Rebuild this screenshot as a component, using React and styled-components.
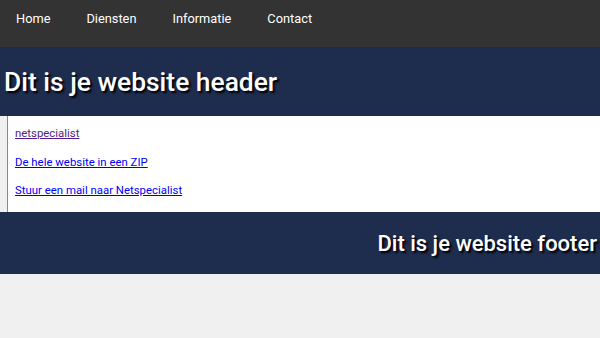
import React from "react";
import styled, { createGlobalStyle } from "styled-components";

const Global = createGlobalStyle`
  html, body { margin: 0; padding: 0; background: #f0f0f0; }
  body { font-family: Roboto, "Liberation Sans", sans-serif; }
`;

const Nav = styled.nav`
  height: 47px;
  background: #333333;
  display: flex;
  align-items: center;
  padding: 0 0 10px 16px;
  box-sizing: border-box;
  gap: 36px;
`;

const NavLink = styled.a`
  color: #ffffff;
  font-size: 12.8px;
  text-decoration: none;
`;

const Banner = styled.header`
  height: ${(p) => (p.$right ? "62px" : "69px")};
  background: #1e2c4e;
  display: flex;
  align-items: center;
  justify-content: ${(p) => (p.$right ? "flex-end" : "flex-start")};
  padding: 0 3px 0 4px;
  box-sizing: border-box;
`;

const BannerTitle = styled.h1`
  margin: 0;
  color: #ffffff;
  font-size: ${(p) => (p.$small ? "22px" : "26.4px")};
  font-weight: 500;
  text-shadow: 2px 2px 2px #000000;
`;

const Main = styled.main`
  display: flex;
  background: #f0f0f0;
`;

const Content = styled.div`
  flex: 1;
  margin-left: 7px;
  border-left: 1px solid #888888;
  background: #ffffff;
  padding: 10px 7px 15px;
  display: flex;
  flex-direction: column;
  align-items: flex-start;
  gap: 14.5px;
  box-sizing: border-box;
`;

const Link = styled.a`
  font-size: 11.4px;
  color: ${(p) => (p.$visited ? "#551a8b" : "#0000ee")};
  text-decoration: underline;
  line-height: 14px;
`;

export default function App() {
  return (
    <>
      <Global />
      <Nav>
        <NavLink href="#">Home</NavLink>
        <NavLink href="#">Diensten</NavLink>
        <NavLink href="#">Informatie</NavLink>
        <NavLink href="#">Contact</NavLink>
      </Nav>
      <Banner>
        <BannerTitle>Dit is je website header</BannerTitle>
      </Banner>
      <Main>
        <Content>
          <Link $visited href="#">netspecialist</Link>
          <Link href="#">De hele website in een ZIP</Link>
          <Link href="#">Stuur een mail naar Netspecialist</Link>
        </Content>
      </Main>
      <Banner as="footer" $right>
        <BannerTitle as="h2" $small>Dit is je website footer</BannerTitle>
      </Banner>
    </>
  );
}
